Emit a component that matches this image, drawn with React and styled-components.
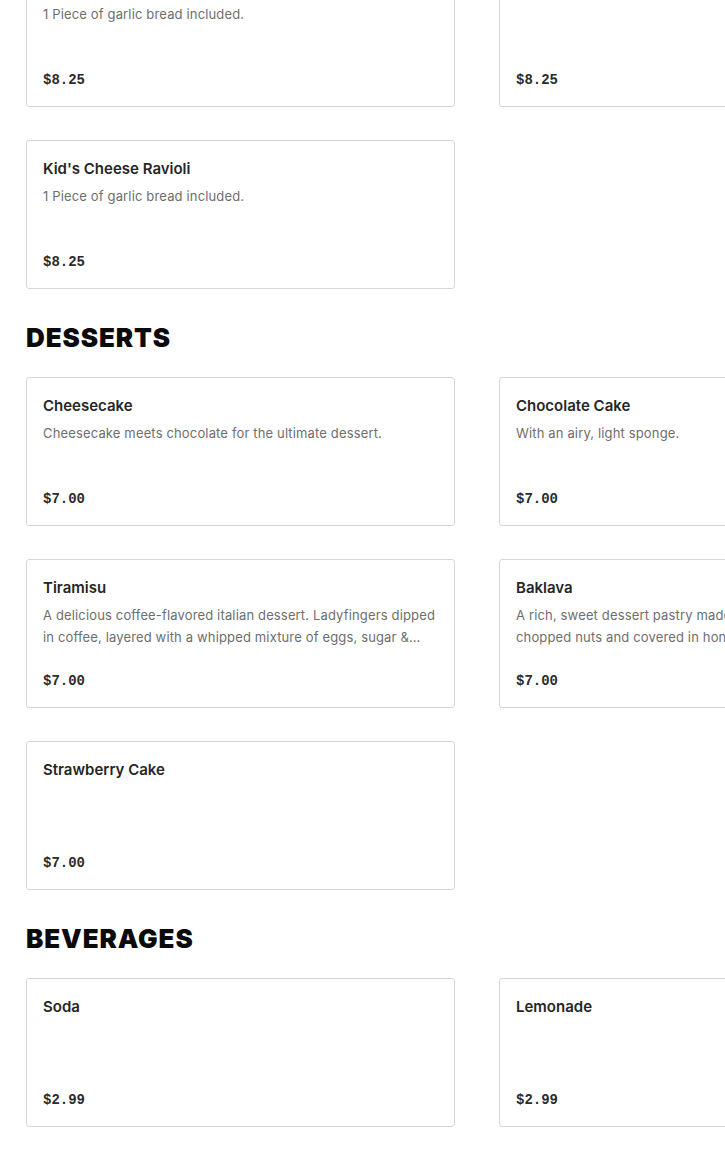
import React from 'react';
import styled, { createGlobalStyle } from 'styled-components';

const GlobalStyle = createGlobalStyle`
  html, body {
    margin: 0;
    padding: 0;
    background: #ffffff;
    overflow-x: hidden;
  }
  body {
    font-family: Inter, "Liberation Sans", sans-serif;
    color: #1f1f1f;
  }
`;

const menu = [
  {
    name: null,
    items: [
      { title: "Kid's Spaghetti", desc: '1 Piece of garlic bread included.', price: '$8.25' },
      { title: "Kid's Fettuccine Alfredo", desc: '', price: '$8.25' },
      { title: "Kid's Cheese Ravioli", desc: '1 Piece of garlic bread included.', price: '$8.25' },
    ],
  },
  {
    name: 'DESSERTS',
    items: [
      { title: 'Cheesecake', desc: 'Cheesecake meets chocolate for the ultimate dessert.', price: '$7.00' },
      { title: 'Chocolate Cake', desc: 'With an airy, light sponge.', price: '$7.00' },
      {
        title: 'Tiramisu',
        desc: 'A delicious coffee-flavored italian dessert. Ladyfingers dipped in coffee, layered with a whipped mixture of eggs, sugar & mascarpone cheese.',
        price: '$7.00',
      },
      {
        title: 'Baklava',
        desc: 'A rich, sweet dessert pastry made of layers of filo filled with chopped nuts and covered in honey syrup.',
        price: '$7.00',
      },
      { title: 'Strawberry Cake', desc: '', price: '$7.00' },
    ],
  },
  {
    name: 'BEVERAGES',
    items: [
      { title: 'Soda', desc: '', price: '$2.99' },
      { title: 'Lemonade', desc: '', price: '$2.99' },
    ],
  },
];

const Page = styled.div`
  width: 902px;
  padding: 0 26px 32px;
  margin-top: -42px;
`;

const Section = styled.section`
  display: flex;
  flex-direction: column;
`;

const SectionTitle = styled.h2`
  margin: 33px 0 23px;
  font-family: Inter, "Liberation Sans", sans-serif;
  font-weight: 900;
  font-size: 26px;
  line-height: 32px;
  letter-spacing: 0.9px;
  color: #0b0b0b;
`;

const Grid = styled.div`
  display: grid;
  grid-template-columns: 429px 429px;
  column-gap: 44px;
  row-gap: 33px;
`;

const Card = styled.div`
  box-sizing: border-box;
  height: 149px;
  padding: 17px 15px 16px 16px;
  border: 1px solid #d6d6d6;
  border-radius: 3px;
  background: #ffffff;
  display: flex;
  flex-direction: column;
`;

const Title = styled.div`
  font-size: 15px;
  font-weight: 600;
  line-height: 22px;
  color: #262626;
`;

const Desc = styled.div`
  margin-top: 5px;
  font-size: 13px;
  letter-spacing: 0.15px;
  line-height: 22px;
  color: #6e6e6e;
  display: -webkit-box;
  -webkit-line-clamp: 2;
  -webkit-box-orient: vertical;
  overflow: hidden;
`;

const Price = styled.div`
  margin-top: auto;
  font-family: "Liberation Mono", "DejaVu Sans Mono", monospace;
  font-weight: 700;
  font-size: 14px;
  line-height: 20px;
  color: #2b2b2b;
`;

const MenuCard = ({ item }) => (
  <Card>
    <Title>{item.title}</Title>
    {item.desc && <Desc>{item.desc}</Desc>}
    <Price>{item.price}</Price>
  </Card>
);

export default function App() {
  return (
    <Page>
      <GlobalStyle />
      {menu.map((section, i) => (
        <Section key={i}>
          {section.name && <SectionTitle>{section.name}</SectionTitle>}
          <Grid>
            {section.items.map((item) => (
              <MenuCard key={item.title} item={item} />
            ))}
          </Grid>
        </Section>
      ))}
    </Page>
  );
}
